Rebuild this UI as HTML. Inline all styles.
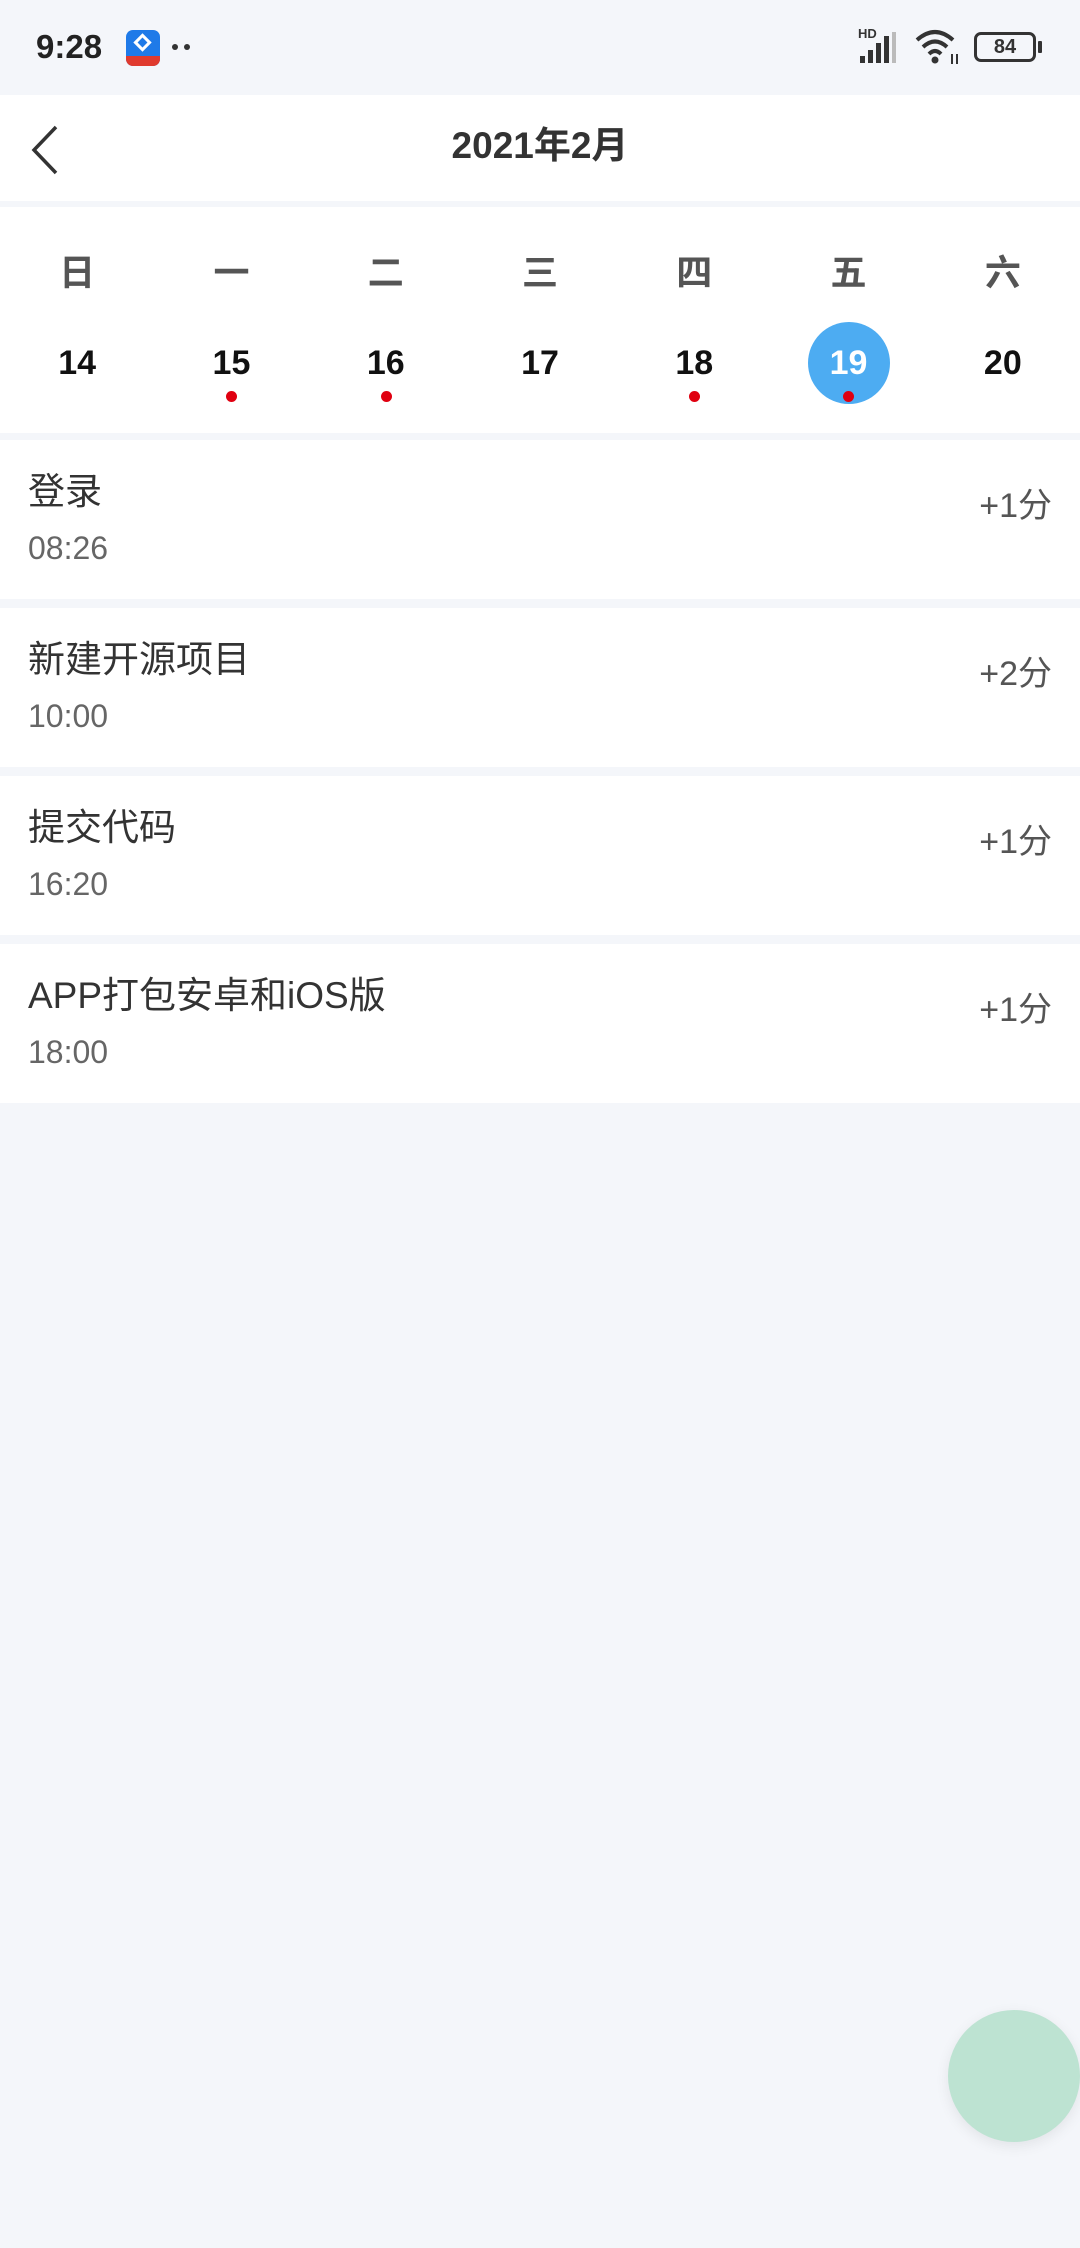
<!DOCTYPE html>
<html><head><meta charset="utf-8"><style>
*{margin:0;padding:0;box-sizing:border-box}
body{width:1080px;height:2248px;background:#f4f6fa;font-family:"Liberation Sans","Noto Sans CJK SC",sans-serif;position:relative;overflow:hidden}
.abs{position:absolute}
.hdr{top:95px;left:0;width:1080px;height:106px;background:#fff}
.cal{top:207px;left:0;width:1080px;height:226px;background:#fff}
.col{position:absolute;width:154.3px;text-align:center}
.wd{top:46px;font-size:36px;color:#555;line-height:40px;font-weight:bold}
.dn{top:136px;font-size:34px;font-weight:bold;color:#111;line-height:40px}
.dot{position:absolute;width:11px;height:11px;border-radius:50%;background:#e00010;top:184px}
.item{left:0;width:1080px;height:159px;background:#fff}
.t{position:absolute;left:28px;top:31px;font-size:37px;color:#333;line-height:42px}
.tm{position:absolute;left:28px;top:90px;font-size:32px;color:#666;line-height:36px}
.pt{position:absolute;right:28px;top:46px;font-size:34px;color:#555;line-height:40px}
</style></head><body>
<div class="abs" style="left:36px;top:28px;font-size:33px;font-weight:bold;color:#222">9:28</div>
<div class="abs" style="left:126px;top:30px;width:34px;height:36px;border-radius:7px;background:#1f7ae8;overflow:hidden"><div style="position:absolute;bottom:0;left:0;width:34px;height:10px;background:#e03a2e"></div><div style="position:absolute;left:10px;top:6px;width:13px;height:13px;border:3px solid #fff;transform:rotate(45deg)"></div></div>
<div class="abs" style="left:172px;top:44px;width:6px;height:6px;border-radius:50%;background:#333"></div>
<div class="abs" style="left:184px;top:44px;width:6px;height:6px;border-radius:50%;background:#333"></div>
<div class="abs" style="left:858px;top:26px;font-size:13px;font-weight:bold;color:#333">HD</div>
<svg class="abs" style="left:858px;top:30px" width="42" height="34"><rect x="2" y="26" width="5" height="7" fill="#333"/><rect x="10" y="20" width="5" height="13" fill="#333"/><rect x="18" y="13" width="5" height="20" fill="#333"/><rect x="26" y="6" width="5" height="27" fill="#333"/><rect x="34" y="2" width="4" height="31" fill="#bbb"/></svg>
<svg class="abs" style="left:914px;top:28px" width="46" height="38"><path d="M3 12 Q21 -4 39 12" fill="none" stroke="#333" stroke-width="4"/><path d="M9 19 Q21 8 33 19" fill="none" stroke="#333" stroke-width="4"/><path d="M15 26 Q21 20 27 26" fill="none" stroke="#333" stroke-width="4"/><circle cx="21" cy="32" r="3.5" fill="#333"/><path d="M38 26v10M43 26v10" stroke="#333" stroke-width="2"/></svg>
<div class="abs" style="left:974px;top:32px;width:62px;height:30px;border:3px solid #333;border-radius:7px;font-size:20px;font-weight:bold;color:#333;text-align:center;line-height:24px">84</div>
<div class="abs" style="left:1038px;top:41px;width:4px;height:12px;background:#333;border-radius:1px"></div>

<div class="abs hdr"></div>
<svg class="abs" style="left:28px;top:124px" width="34" height="52"><path d="M28 3 L6 26 L28 49" fill="none" stroke="#333" stroke-width="3.5"/></svg>
<div class="abs" style="left:0;width:1080px;top:124px;text-align:center;font-size:37px;font-weight:bold;color:#333;line-height:44px">2021年2月</div>

<div class="abs cal">
<div class="abs" style="left:808px;top:115px;width:82px;height:82px;border-radius:50%;background:#4dacf2"></div>
<div class="col wd" style="left:0">日</div><div class="col wd" style="left:154.3px">一</div><div class="col wd" style="left:308.6px">二</div><div class="col wd" style="left:462.9px">三</div><div class="col wd" style="left:617.1px">四</div><div class="col wd" style="left:771.4px">五</div><div class="col wd" style="left:925.7px">六</div>
<div class="col dn" style="left:0">14</div><div class="col dn" style="left:154.3px">15</div><div class="col dn" style="left:308.6px">16</div><div class="col dn" style="left:462.9px">17</div><div class="col dn" style="left:617.1px">18</div><div class="col dn" style="left:771.4px;color:#fff">19</div><div class="col dn" style="left:925.7px">20</div>
<div class="dot" style="left:226px"></div><div class="dot" style="left:381px"></div><div class="dot" style="left:689px"></div><div class="dot" style="left:843px"></div>
</div>

<div class="abs item" style="top:440px"><div class="t">登录</div><div class="tm">08:26</div><div class="pt">+1分</div></div>
<div class="abs item" style="top:608px"><div class="t">新建开源项目</div><div class="tm">10:00</div><div class="pt">+2分</div></div>
<div class="abs item" style="top:776px"><div class="t">提交代码</div><div class="tm">16:20</div><div class="pt">+1分</div></div>
<div class="abs item" style="top:944px"><div class="t">APP打包安卓和iOS版</div><div class="tm">18:00</div><div class="pt">+1分</div></div>

<div class="abs" style="left:948px;top:2010px;width:132px;height:132px;border-radius:50%;background:#bde3d2;box-shadow:0 4px 14px rgba(0,0,0,0.08)"></div>
</body></html>
